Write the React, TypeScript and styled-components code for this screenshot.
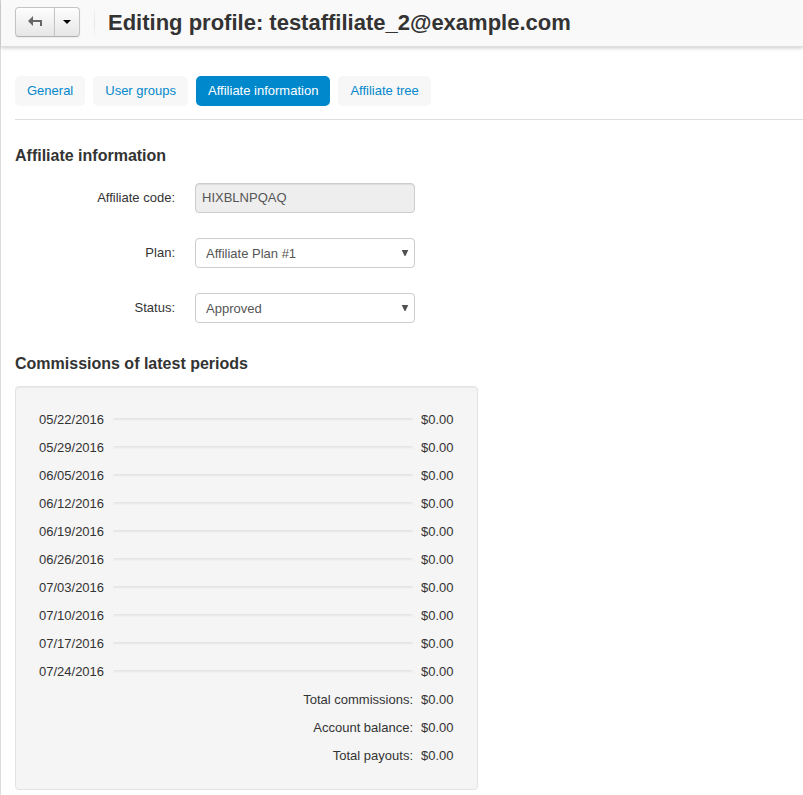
import React from "react";
import styled, { createGlobalStyle } from "styled-components";

const GlobalStyle = createGlobalStyle`
  * { box-sizing: border-box; }
  body {
    margin: 0;
    background: #fff;
    color: #333;
    font: 13px/20px "Liberation Sans", Arial, sans-serif;
  }
`;

const Page = styled.div`
  min-height: 100vh;
  border-left: 1px solid #dcdcdc;
`;

const Header = styled.header`
  display: flex;
  align-items: center;
  height: 47px;
  padding: 0 14px;
  background: #f9f9f9;
  border-bottom: 1px solid #dedede;
  box-shadow: 0 1px 4px rgba(0, 0, 0, 0.22);
`;

const ButtonGroup = styled.div`
  display: flex;
  height: 30px;
  margin-bottom: 2px;
`;

const ToolButton = styled.button<{ $side: "left" | "right" }>`
  display: flex;
  align-items: center;
  justify-content: center;
  width: ${(p) => (p.$side === "left" ? 40 : 26)}px;
  margin-left: ${(p) => (p.$side === "left" ? 0 : -1)}px;
  padding: 0;
  border: 1px solid #c4c4c4;
  border-bottom-color: #b0b0b0;
  border-radius: ${(p) => (p.$side === "left" ? "4px 0 0 4px" : "0 4px 4px 0")};
  background: linear-gradient(#fefefe, #e6e6e6);
  box-shadow: inset 0 1px 0 rgba(255, 255, 255, 0.2), 0 1px 2px rgba(0, 0, 0, 0.05);
  cursor: pointer;
`;

const Divider = styled.div`
  width: 1px;
  height: 34px;
  margin: 0 13px 0 14px;
  background: linear-gradient(#f9f9f9, #e6e6e6, #f9f9f9);
`;

const Title = styled.h1`
  margin: 0;
  font-size: 22px;
  line-height: 30px;
  white-space: nowrap;
`;

const Content = styled.main`
  padding: 29px 0 5px 14px;
`;

const Tabs = styled.nav`
  display: flex;
  gap: 8px;
  padding-bottom: 13px;
  border-bottom: 1px solid #ddd;
`;

const Tab = styled.a<{ $active?: boolean }>`
  padding: 5px 12px;
  border-radius: 5px;
  background: ${(p) => (p.$active ? "#0088cc" : "#f7f7f7")};
  color: ${(p) => (p.$active ? "#fff" : "#0388cc")};
  text-decoration: none;
  white-space: nowrap;
`;

const SectionTitle = styled.h2`
  margin: 0;
  font-size: 16px;
  line-height: 20px;
`;

const Section = styled.section`
  padding-top: 26px;
`;

const Fields = styled.div`
  display: grid;
  gap: 25px;
  padding: 17px 0 5px;
`;

const Field = styled.div`
  display: grid;
  grid-template-columns: 160px 220px;
  column-gap: 20px;
  height: 30px;
`;

const Label = styled.label`
  padding-top: 5px;
  text-align: right;
`;

const Input = styled.input`
  width: 100%;
  height: 30px;
  padding: 3px 6px 5px;
  border: 1px solid #ccc;
  border-radius: 4px;
  background: #eee;
  box-shadow: inset 0 1px 1px rgba(0, 0, 0, 0.075);
  color: #555;
  font: inherit;
  outline: none;
`;

const SelectBox = styled.div`
  position: relative;
`;

const Select = styled.select`
  appearance: none;
  width: 100%;
  height: 30px;
  padding: 2px 20px 0 10px;
  border: 1px solid #ccc;
  border-radius: 4px;
  background: #fff;
  color: #555;
  font: inherit;
`;

const SelectArrow = styled.svg`
  position: absolute;
  top: 12px;
  right: 6px;
  pointer-events: none;
`;

const Panel = styled.div`
  width: fit-content;
  margin-top: 12px;
  padding: 19px;
  border: 1px solid #e3e3e3;
  border-radius: 4px;
  background: #f5f5f5;
  box-shadow: inset 0 1px 1px rgba(0, 0, 0, 0.05);
`;

const Table = styled.table`
  border-collapse: collapse;
`;

const Cell = styled.td<{ $right?: boolean }>`
  padding: 4px;
  line-height: 20px;
  text-align: ${(p) => (p.$right ? "right" : "left")};
  white-space: nowrap;
`;

const DateCell = styled(Cell)`
  min-width: 74px;
`;

const Track = styled.div`
  width: 300px;
  height: 4px;
  margin-bottom: 1px;
  border-radius: 2px;
  background: linear-gradient(#e2e2e2, #f9f9f9);
`;

const periods = [
  "05/22/2016",
  "05/29/2016",
  "06/05/2016",
  "06/12/2016",
  "06/19/2016",
  "06/26/2016",
  "07/03/2016",
  "07/10/2016",
  "07/17/2016",
  "07/24/2016",
];

const totals = ["Total commissions:", "Account balance:", "Total payouts:"];

function SelectField({ id, label, options }: { id: string; label: string; options: string[] }) {
  return (
    <Field>
      <Label htmlFor={id}>{label}</Label>
      <SelectBox>
        <Select id={id}>
          {options.map((o) => (
            <option key={o}>{o}</option>
          ))}
        </Select>
        <SelectArrow width="8" height="7" viewBox="0 0 8 7" aria-hidden="true">
          <path d="M0.7 0h6.6L4.4 6h-0.8z" fill="#505050" />
        </SelectArrow>
      </SelectBox>
    </Field>
  );
}

export default function App() {
  return (
    <>
      <GlobalStyle />
      <Page>
        <Header>
          <ButtonGroup>
            <ToolButton $side="left" type="button" aria-label="Back">
              <svg width="14" height="12" viewBox="0 0 14 12" aria-hidden="true">
                <path d="M0 5 5 0v4h9v6h-2V6H5v4z" fill="#666" />
              </svg>
            </ToolButton>
            <ToolButton $side="right" type="button" aria-label="More actions">
              <svg width="8" height="4" viewBox="0 0 8 4" aria-hidden="true">
                <path d="M0 0h8L4 4z" fill="#000" />
              </svg>
            </ToolButton>
          </ButtonGroup>
          <Divider />
          <Title>Editing profile: testaffiliate_2@example.com</Title>
        </Header>
        <Content>
          <Tabs>
            <Tab href="#general">General</Tab>
            <Tab href="#groups">User groups</Tab>
            <Tab href="#affiliate" $active aria-current="page">
              Affiliate information
            </Tab>
            <Tab href="#tree">Affiliate tree</Tab>
          </Tabs>
          <Section id="affiliate">
            <SectionTitle>Affiliate information</SectionTitle>
            <Fields>
              <Field>
                <Label htmlFor="code">Affiliate code:</Label>
                <Input id="code" readOnly value="HIXBLNPQAQ" />
              </Field>
              <SelectField id="plan" label="Plan:" options={["Affiliate Plan #1"]} />
              <SelectField id="status" label="Status:" options={["Approved", "Declined"]} />
            </Fields>
          </Section>
          <Section>
            <SectionTitle>Commissions of latest periods</SectionTitle>
            <Panel>
              <Table>
                <tbody>
                  {periods.map((date) => (
                    <tr key={date}>
                      <DateCell>{date}</DateCell>
                      <Cell>
                        <Track />
                      </Cell>
                      <Cell $right>$0.00</Cell>
                    </tr>
                  ))}
                  {totals.map((label) => (
                    <tr key={label}>
                      <Cell colSpan={2} $right>
                        {label}
                      </Cell>
                      <Cell $right>$0.00</Cell>
                    </tr>
                  ))}
                </tbody>
              </Table>
            </Panel>
          </Section>
        </Content>
      </Page>
    </>
  );
}
